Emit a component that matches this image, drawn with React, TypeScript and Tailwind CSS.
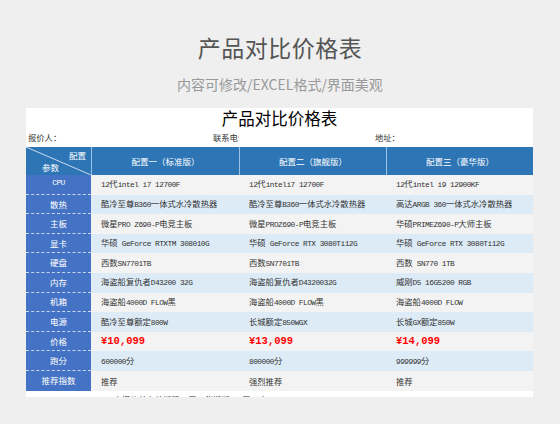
import { FC } from "react"

const cjk = { fontFamily: '"Noto Sans CJK SC", "Noto Sans", sans-serif' }
const mono = { fontFamily: '"Liberation Mono", "Noto Sans CJK SC", monospace' }

// 宋体风格：拉丁字符用等宽字体，半个汉字宽
const Mixed: FC<{ text: string }> = ({ text }) => {
  const parts = text.split(/([\u4e00-\u9fff\u3000-\u303f\uff00-\uffef]+)/).filter(Boolean)
  return <>
    {parts.map((p, i) => /[\u4e00-\u9fff\u3000-\u303f\uff00-\uffef]/.test(p)
      ? <span key={i} style={cjk}>{p}</span>
      : <span key={i} style={mono} className="text-[7.8px] tracking-[-0.52px] whitespace-pre">{p}</span>)}
  </>
}

const rows: { label: string, values: string[], price?: boolean }[] = [
  { label: "CPU", values: ["12代intel i7 12700F", "12代inteli7 12700F", "12代intel i9 12900KF"] },
  { label: "散热", values: ["酷冷至尊B360一体式水冷散热器", "酷冷至尊B360一体式水冷散热器", "高达ARGB 360一体式水冷散热器"] },
  { label: "主板", values: ["微星PRO Z690-P电竞主板", "微星PROZ690-P电竞主板", "华硕PRIMEZ690-P大师主板"] },
  { label: "显卡", values: ["华硕 GeForce RTXTM 308010G", "华硕 GeForce RTX 3080Ti12G", "华硕 GeForce RTX 3080Ti12G"] },
  { label: "硬盘", values: ["西数SN7701TB", "西数SN7701TB", "西数 SN770 1TB"] },
  { label: "内存", values: ["海盗船复仇者D43200 32G", "海盗船复仇者D4320032G", "威刚D5 16G5200 RGB"] },
  { label: "机箱", values: ["海盗船4000D FLOW黑", "海盗船4000D FLOW黑", "海盗船4000D FLOW"] },
  { label: "电源", values: ["酷冷至尊额定800W", "长城额定850WGX", "长城GX额定850W"] },
  { label: "价格", values: ["¥10,099", "¥13,099", "¥14,099"], price: true },
  { label: "跑分", values: ["600000分", "800000分", "999999分"] },
  { label: "推荐指数", values: ["推荐", "强烈推荐", "推荐"] },
]

const cols = "grid grid-cols-[65px_148px_147px_147px]"

const App: FC = () => {
  return <div className="h-[424px] w-[560px] bg-[#efefef] overflow-hidden flex flex-col items-center" style={cjk}>
    <h1 className="mt-[33px] text-[23px] leading-[28px] text-[#555555] tracking-[0.5px]">产品对比价格表</h1>
    <p className="mt-[14px] text-[14px] leading-[18px] text-[#999999]">内容可修改/EXCEL格式/界面美观</p>

    <section className="mt-[15px] self-start ml-[26px] w-[507px] h-[289px] bg-white overflow-hidden">
      <div className="h-[20px] text-center text-[16.5px] leading-[20px] text-black">产品对比价格表</div>
      <div className="h-[19px] pt-[4px] flex text-[8.3px] leading-[10px] text-[#333333]">
        <span className="pl-[2px] w-[187px]">报价人：</span>
        <span className="w-[162px] flex"><span className="w-[25.5px] overflow-hidden whitespace-nowrap">联系电话：</span></span>
        <span>地址：</span>
      </div>

      <div className={cols + " h-[28px] bg-[#2e75b6] text-white text-[8.5px]"}>
        <div className="relative">
          <svg className="absolute inset-0" width="65" height="28" viewBox="0 0 65 28">
            <line x1="0" y1="0" x2="65" y2="28" stroke="#dbe7f3" strokeWidth="0.9" />
          </svg>
          <span className="absolute right-[5px] top-[3px] leading-[10px]">配置</span>
          <span className="absolute left-[16px] bottom-[3px] leading-[10px]">参数</span>
        </div>
        {["配置一（标准版）", "配置二（旗舰版）", "配置三（豪华版）"].map(h =>
          <div key={h} className="flex items-center justify-center border-l border-[#9dc3e6]">{h}</div>)}
      </div>

      {rows.map((r, i) => <div key={r.label} className={cols + " h-[19.6px] " + (i % 2 === 0 ? "bg-[#f3f3f3]" : "bg-[#ddebf7]")}>
        <div className={"bg-[#4472c4] text-white text-[8.5px] flex items-center justify-center " + (i < rows.length - 1 ? "border-b border-dashed border-[#c9d6ee]" : "")}>
          {r.label === "CPU" ? <span style={mono} className="text-[7.8px] tracking-[-0.5px]">CPU</span> : r.label}
        </div>
        {r.values.map((v, j) => <div key={j} className="flex items-center pl-[10px] whitespace-nowrap overflow-hidden">
          {r.price
            ? <span style={mono} className="text-[10.5px] font-bold text-[#ff0000] leading-none">{v}</span>
            : <span className="text-[8.3px] text-[#333333] leading-none"><Mixed text={v} /></span>}
        </div>)}
      </div>)}

      <div className="pt-[3px] pl-[75px] text-[8.3px] leading-[10px] text-[#333333] whitespace-nowrap">
        <Mixed text="1、本报价单有效期限15天，货期期，3天以内" />
      </div>
    </section>
  </div>
}

export default App
